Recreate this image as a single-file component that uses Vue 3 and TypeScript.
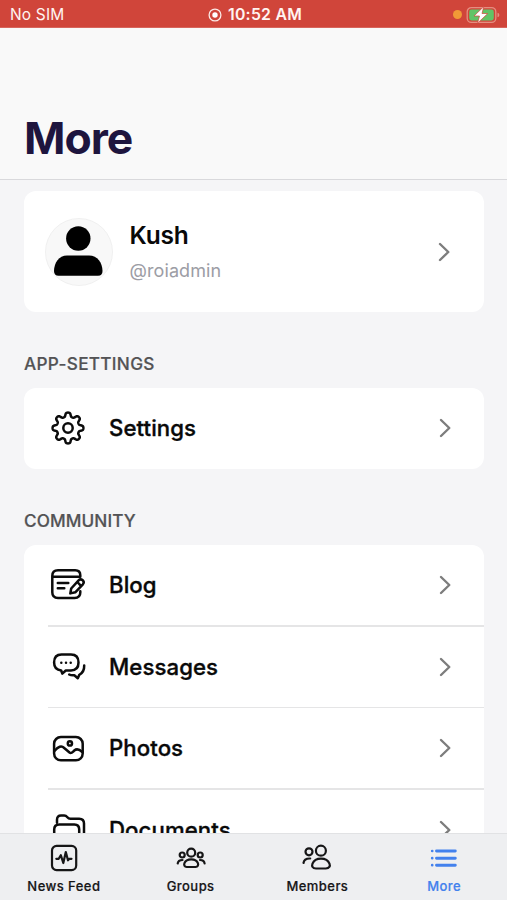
<script setup lang="ts">
interface MenuItem {
  label: string
  icon: string
}

const community: MenuItem[] = [
  { label: 'Blog', icon: 'blog' },
  { label: 'Messages', icon: 'messages' },
  { label: 'Photos', icon: 'photos' },
  { label: 'Documents', icon: 'documents' },
]

const tabs: MenuItem[] = [
  { label: 'News Feed', icon: 'feed' },
  { label: 'Groups', icon: 'groups' },
  { label: 'Members', icon: 'members' },
  { label: 'More', icon: 'more' },
]

// Eight-toothed cog outline centred in a 40x40 box.
function cogPath(): string {
  const points: string[] = []
  for (let i = 0; i < 240; i++) {
    const angle = (i / 240) * Math.PI * 2
    const wave = Math.tanh(1.7 * Math.cos(8 * angle)) / Math.tanh(1.7)
    const radius = 13.4 + 2 * wave
    points.push(`${(20 + radius * Math.cos(angle)).toFixed(2)} ${(20 + radius * Math.sin(angle)).toFixed(2)}`)
  }
  return `M${points.join('L')}Z`
}

const cog = cogPath()
</script>

<template>
  <div class="screen">
    <div class="status">
      <span class="carrier">No SIM</span>
      <span class="clock">
        <svg width="14" height="14" viewBox="0 0 14 14"><circle cx="7" cy="7" r="5.9" fill="none" stroke="#fbe9e6" stroke-width="1.3" /><circle cx="7" cy="7" r="2.7" fill="#fff" /></svg>
        <span class="time">10:52 AM</span>
      </span>
      <span class="power">
        <i class="mic"></i>
        <svg width="34" height="18" viewBox="0 0 34 18">
          <rect x="1.2" y="1.6" width="28.6" height="14.8" rx="4.2" fill="none" stroke="#e58e80" stroke-width="1.3" />
          <path d="M31.5 6.8q1.9.5 1.9 2.2t-1.9 2.2z" fill="#e58e80" />
          <rect x="3.2" y="3.6" width="24.6" height="10.8" rx="2.3" fill="#61c466" />
          <path d="M17.800 .6L8 10h5.500l-2 7.200 10.300-9.700h-5.800z" fill="#fff" stroke="#d0483b" stroke-width=".7" />
        </svg>
      </span>
    </div>

    <header class="header"><h1>More</h1></header>

    <main class="content">
      <section class="card profile">
        <svg class="avatar" width="68" height="68" viewBox="0 0 68 68">
          <circle cx="34" cy="34" r="33.5" fill="#f8f8f8" stroke="#f0f0f0" />
          <circle cx="33.3" cy="20.5" r="12.2" />
          <path d="M22 37.500H44C52.500 37.500 57.500 45 57.500 53C57.500 56 56 57.800 53 57.800H13.500C10.500 57.800 9 56 9 53C9 45 14 37.500 22 37.500Z" />
        </svg>
        <div class="person">
          <div class="name">Kush</div>
          <div class="handle">@roiadmin</div>
        </div>
        <svg class="chevron" width="14" height="22" viewBox="0 0 14 22"><path d="M3 3L11.300 11L3 19" /></svg>
      </section>

      <h2 class="label">APP-SETTINGS</h2>
      <section class="card">
        <div class="row">
          <svg class="icon" width="40" height="40" viewBox="0 0 40 40"><path :d="cog" /><circle cx="20" cy="20" r="4.700" /></svg>
          <span class="title">Settings</span>
          <svg class="chevron" width="14" height="22" viewBox="0 0 14 22"><path d="M3 3L11.300 11L3 19" /></svg>
        </div>
      </section>

      <h2 class="label community">COMMUNITY</h2>
      <section class="card list">
        <div v-for="item in community" :key="item.label" class="row">
          <svg class="icon" width="40" height="40" viewBox="0 0 40 40">
            <g v-if="item.icon === 'blog'">
              <path d="M32.300 11.800V10.300Q32.300 5.200 27.200 5.200H10Q4.300 5.200 4.300 10.900V27.300Q4.300 33 10 33H26.600Q32.300 33 32.300 27.600V26.300M5 11.800H32" />
              <path d="M9.800 18H20.300M9.800 23.200H16.300" />
              <path d="M22.300 28.400L23.200 23.500L30.600 15.300Q32.500 13.400 34.700 15.200Q36.700 17.200 34.900 19.300L27.300 27.300ZM29.300 17L33 20.800" />
            </g>
            <g v-else-if="item.icon === 'messages'">
              <path d="M13.500 7.600H23Q30.500 7.600 30.500 15.600Q30.500 23.500 23 23.500H17.800L14.300 26.700L13.200 23.500Q6.100 23 6.100 15.600Q6.100 7.600 13.500 7.600Z" />
              <path d="M36.200 18.500Q36.400 25.200 31.300 27.800L29.800 31.300L26.300 28.300Q23.200 28.600 21.200 27.500" />
              <path class="dots" d="M13.300 15.700h.01M18 15.700h.01M22.700 15.700h.01" />
            </g>
            <g v-else-if="item.icon === 'photos'">
              <rect x="6.100" y="9" width="28.600" height="23.300" rx="6.800" />
              <circle cx="21.900" cy="15.400" r="2.100" />
              <path d="M6.700 22.700C10.200 18.500 13.500 17.400 16.200 20L21.500 24.500C23.500 26 24.500 24 26.300 22.500C29 20.200 31.300 21.300 34.300 24" />
            </g>
            <g v-else>
              <path d="M9 12.700V9.700Q9 5.600 13 5.600H16.100Q18 5.600 19.400 7.300Q20.500 8.700 22.400 8.700H31.200Q36 8.700 36 13.500V29Q36 34 31 34" />
              <path d="M6.200 30V19.500Q6.200 14.400 11.300 14.400H26.400Q31.200 14.400 31.200 19.500V34H10Q6.200 34 6.200 30Z" />
            </g>
          </svg>
          <span class="title">{{ item.label }}</span>
          <svg class="chevron" width="14" height="22" viewBox="0 0 14 22"><path d="M3 3L11.300 11L3 19" /></svg>
        </div>
      </section>
    </main>

    <nav class="tabs">
      <div v-for="tab in tabs" :key="tab.label" class="tab" :class="{ active: tab.icon === 'more' }">
        <svg class="tab-icon" width="30" height="30" viewBox="0 0 30 30">
          <g v-if="tab.icon === 'feed'">
            <rect x="3" y="2.900" width="24.200" height="24.200" rx="4.600" />
            <path d="M7.300 15.800H9.700L11.800 12.200L14.300 20L16.800 9L19 17.300L20.200 15.800H22.500" />
          </g>
          <g v-else-if="tab.icon === 'groups'">
            <circle cx="15.200" cy="9.700" r="4" />
            <circle cx="6.200" cy="12" r="2.500" /><circle cx="24.200" cy="12" r="2.500" />
            <path d="M10.700 24H19.600C24 24 22.800 16.400 15.200 16.400S6.300 24 10.700 24ZM1.700 20.500Q2.200 17 6.500 17M28.600 20.500Q28.200 17 24 17" />
          </g>
          <g v-else-if="tab.icon === 'members'">
            <circle cx="18.900" cy="7.700" r="5" /><circle cx="7" cy="8.800" r="3.500" />
            <path d="M14 25.500H23.800C31 25.500 28 15.600 19 15.600S7 25.500 14 25.500ZM1.500 20Q2.200 15.200 8.200 15.500" />
          </g>
          <g v-else>
            <path d="M7.500 8H26.300M7.500 15.200H26.300M7.500 22.200H26.300" stroke-width="2.900" />
            <path d="M3.200 8h.01M3.200 15.200h.01M3.200 22.200h.01" stroke-width="2.700" />
          </g>
        </svg>
        <span class="tab-label">{{ tab.label }}</span>
      </div>
    </nav>
  </div>
</template>

<style>
body { background: #f5f5f7; }
</style>

<style scoped>
* { box-sizing: border-box; }
.screen {
  width: 507px;
  height: 900px;
  overflow: hidden;
  display: flex;
  flex-direction: column;
  background: #f5f5f7;
  font-family: Inter, "Liberation Sans", sans-serif;
  color: #090909;
}
.status {
  height: 28px;
  flex: none;
  display: grid;
  grid-template-columns: 1fr auto 1fr;
  align-items: center;
  padding: 2px 7px 0 10px;
  background: #d0453a;
  border-bottom: 1px solid #d7655c;
  color: #fff4f1;
  font-size: 15px;
}
.carrier { font-size: 15.500px; letter-spacing: .15px; }
.clock { display: flex; align-items: center; gap: 6px; font-weight: 600; }
.time { font-size: 15.800px; letter-spacing: .25px; }
.power { display: flex; align-items: center; justify-content: flex-end; gap: 4px; }
.mic { width: 9px; height: 9px; border-radius: 50%; background: #f19a37; }
.header {
  height: 152px;
  flex: none;
  display: flex;
  align-items: flex-end;
  padding: 0 24px 14px;
  background: #f9f9f9;
  border-bottom: 1px solid #d9d9dc;
}
h1 { margin: 0; font-size: 44.500px; line-height: 54px; font-weight: 700; letter-spacing: -1px; color: #1e153e; }
.content { flex: 1; min-height: 0; overflow: hidden; padding: 11px 23px 0 24px; }
.card { background: #fff; border-radius: 12px; }
.profile { height: 121px; display: flex; align-items: center; padding: 0 33px 0 20.500px; }
.avatar { flex: none; }
.person { flex: 1; padding-left: 17px; }
.name { font-size: 24.500px; line-height: 34px; font-weight: 600; letter-spacing: -.2px; }
.handle { margin-top: 4px; font-size: 18px; line-height: 30px; letter-spacing: .1px; color: #9c9da5; }
.label { margin: 0; height: 76px; padding-top: 40px; font-size: 17.200px; line-height: 24px; font-weight: 500; letter-spacing: .3px; color: #535355; -webkit-text-stroke: .2px #535355; }
.community { letter-spacing: .1px; }
.row { position: relative; height: 80.500px; display: flex; align-items: center; padding: 0 32px 0 24px; }
.list .row { height: 81.600px; }
.list .row + .row::before { content: ""; position: absolute; left: 24px; right: 0; top: -1px; height: 1.500px; background: #e5e5e6; }
.title { flex: 1; padding: 0 0 1.500px 21px; font-size: 22.200px; font-weight: 500; letter-spacing: .08px; -webkit-text-stroke: .35px #090909; }
.icon { flex: none; fill: none; stroke: #0c0c0c; stroke-width: 2.500; stroke-linecap: round; stroke-linejoin: round; }
.dots { stroke-width: 2.500; }
.chevron { flex: none; fill: none; stroke: #7d7d7d; stroke-width: 2.400; stroke-linecap: round; stroke-linejoin: round; }
.tabs {
  height: 67px;
  flex: none;
  display: grid;
  grid-template-columns: repeat(4, 1fr);
  background: #eeeff1;
  border-top: 1px solid #e1e2e4;
}
.tab { display: flex; flex-direction: column; align-items: center; padding: 9px 0 0 1px; color: #161617; }
.tab-icon { fill: none; stroke: currentColor; stroke-width: 2.200; stroke-linecap: round; stroke-linejoin: round; }
.tab-label { margin-top: 4px; font-size: 13px; line-height: 18px; font-weight: 500; letter-spacing: .45px; -webkit-text-stroke: .2px currentColor; }
.active { color: #4381ed; }
</style>
